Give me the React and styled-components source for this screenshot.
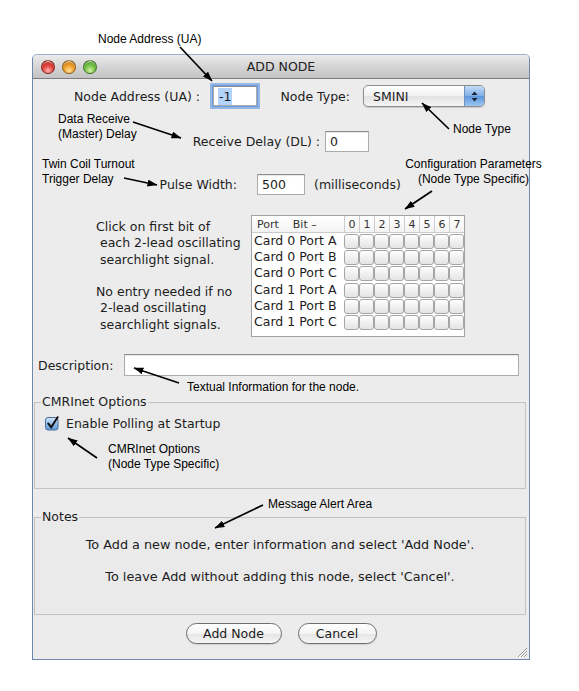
import React from 'react';
import styled, { createGlobalStyle } from 'styled-components';

const GlobalStyle = createGlobalStyle`
  html, body {
    margin: 0;
    padding: 0;
    background: #fff;
  }
  body {
    font-family: "DejaVu Sans", "Liberation Sans", sans-serif;
  }
`;

const Stage = styled.div`
  position: relative;
  width: 579px;
  height: 691px;
  box-sizing: border-box;
  padding: 54px 0 0 32px;
  background: #fff;
`;

const Window = styled.div`
  position: relative;
  width: 498px;
  height: 606px;
  box-sizing: border-box;
  border: 1px solid #6f89ad;
  border-top-color: #9db2cc;
  border-radius: 5px 5px 0 0;
  background: #ececec;
  display: flex;
  flex-direction: column;
  font-size: 12.5px;
  color: #1c1c1c;
`;

const TitleBar = styled.div`
  height: 23px;
  flex: none;
  border-bottom: 1px solid #7d7d7d;
  border-radius: 4px 4px 0 0;
  background: linear-gradient(#ebebeb, #d3d3d3 55%, #c3c3c3);
  display: grid;
  grid-template-columns: 1fr auto 1fr;
  align-items: center;
`;

const Lights = styled.div`
  display: flex;
  gap: 7px;
  padding-left: 8px;
`;

const lightColors = {
  red: ['#ffb3ad', '#e2453e', '#a8201a'],
  amber: ['#ffe19c', '#f2a12c', '#b86a10'],
  green: ['#d2f3a6', '#79c44a', '#3f8a1f'],
};

const Light = styled.span`
  width: 14px;
  height: 14px;
  border-radius: 50%;
  box-sizing: border-box;
  border: 1px solid rgba(0, 0, 0, 0.35);
  background: ${(p) => {
    const [hi, mid, lo] = lightColors[p.$color];
    return `radial-gradient(circle at 50% 80%, ${hi} 0%, ${mid} 45%, ${lo} 100%)`;
  }};
  box-shadow: inset 0 2px 1px -1px rgba(255, 255, 255, 0.7);
`;

const Title = styled.div`
  font-size: 12.5px;
  color: #222;
`;

const Body = styled.div`
  flex: 1;
  display: flex;
  flex-direction: column;
`;

const Row = styled.div`
  display: flex;
  align-items: center;
  height: ${(p) => p.$h}px;
  margin-top: ${(p) => p.$mt}px;
  flex: none;
`;

const Label = styled.div`
  width: ${(p) => (p.$w ? `${p.$w}px` : 'auto')};
  margin-left: ${(p) => p.$ml || 0}px;
  text-align: ${(p) => (p.$right ? 'right' : 'left')};
  white-space: nowrap;
  flex: none;
`;

const Field = styled.div`
  width: ${(p) => p.$w}px;
  height: ${(p) => p.$h || 21}px;
  margin-left: ${(p) => p.$ml || 0}px;
  box-sizing: border-box;
  flex: none;
  background: #fff;
  border: 1px solid #acacac;
  border-top-color: #8c8c8c;
  box-shadow: ${(p) =>
    p.$focus
      ? '0 0 0 1px #6a9be0, 0 0 0 3px rgba(120, 166, 226, 0.75)'
      : 'inset 0 1px 1px rgba(0, 0, 0, 0.1)'};
  padding-left: 4px;
  display: flex;
  align-items: center;
`;

const Selected = styled.span`
  background: #b3d3fb;
  padding: 1px 1px;
`;

const Select = styled.div`
  width: 122px;
  height: 22px;
  margin-left: 13px;
  box-sizing: border-box;
  border: 1px solid #8d8d8d;
  border-radius: 5px;
  overflow: hidden;
  display: flex;
  align-items: stretch;
  background: linear-gradient(#ffffff, #f1f1f1 50%, #e3e3e3 52%, #f4f4f4);
  box-shadow: 0 1px 1px rgba(0, 0, 0, 0.15);
`;

const SelectValue = styled.span`
  flex: 1;
  padding-left: 9px;
  display: flex;
  align-items: center;
`;

const SelectButton = styled.span`
  width: 19px;
  border-left: 1px solid #6f8fbd;
  background: linear-gradient(#c5dcf6, #80b0e8 48%, #5e97df 52%, #9cc6f0);
  display: flex;
  align-items: center;
  justify-content: center;
`;

const HelpText = styled.div`
  width: 155px;
  margin-left: 63px;
  align-self: flex-start;
  padding-top: 4px;
  white-space: pre;
  line-height: 16.3px;
  flex: none;
`;

const BitTable = styled.div`
  width: 214px;
  height: 122px;
  box-sizing: border-box;
  border: 1px solid #a3a3a3;
  background: #fff;
  display: flex;
  flex-direction: column;
  flex: none;
`;

const HeadRow = styled.div`
  display: grid;
  grid-template-columns: 92px repeat(8, 15px);
  height: 16px;
  border-bottom: 1px solid #cbcbcb;
  background: linear-gradient(#ffffff, #f3f3f3);
  font-size: 11px;
  color: #333;
`;

const HeadCell = styled.div`
  display: flex;
  align-items: center;
  justify-content: ${(p) => (p.$first ? 'flex-start' : 'center')};
  border-left: ${(p) => (p.$first ? 'none' : '1px solid #cdcdcd')};
  padding-left: ${(p) => (p.$first ? '5px' : '0')};
  white-space: pre;
`;

const DataRow = styled.div`
  display: grid;
  grid-template-columns: 92px repeat(8, 15px);
  height: 16.2px;
`;

const RowLabel = styled.div`
  padding-left: 2px;
  line-height: 16px;
  white-space: nowrap;
`;

const Bit = styled.div`
  margin-top: 1px;
  height: 15px;
  box-sizing: border-box;
  border: 1px solid #a5a5a5;
  border-radius: 3px;
  background: linear-gradient(#ffffff, #f0f0f0 50%, #e4e4e4);
`;

const Fieldset = styled.fieldset`
  margin: ${(p) => p.$mt}px 0 0 1px;
  width: 492px;
  height: ${(p) => p.$h}px;
  box-sizing: border-box;
  padding: ${(p) => p.$pt}px 10px 0 10px;
  border: 1px solid #c2c2c2;
  border-radius: 0;
  background: #eaeaea;
  flex: none;
`;

const Legend = styled.legend`
  margin-left: -4px;
  padding: 0 1px;
  line-height: 16px;
  font-size: 12.5px;
  color: #1c1c1c;
`;

const CheckRow = styled.label`
  display: flex;
  align-items: center;
  gap: 6px;
  height: 16px;
`;

const Note = styled.p`
  margin: ${(p) => p.$mt}px 0 0;
  text-align: center;
  font-size: 12.8px;
  line-height: 16px;
`;

const ButtonBar = styled.div`
  display: flex;
  justify-content: center;
  gap: 16px;
  margin-top: 8px;
  flex: none;
`;

const Button = styled.button`
  width: ${(p) => p.$w}px;
  height: 21px;
  box-sizing: border-box;
  border: 1px solid #6e6e6e;
  border-radius: 11px;
  padding: 0;
  font-family: inherit;
  font-size: 12.5px;
  color: #1c1c1c;
  background: linear-gradient(#ffffff, #f4f4f4 50%, #e5e5e5 54%, #f6f6f6);
  box-shadow: 0 1px 1px rgba(0, 0, 0, 0.12);
`;

const Grip = styled.svg`
  position: absolute;
  right: 1px;
  bottom: 1px;
`;

const Overlay = styled.svg`
  position: absolute;
  left: 0;
  top: 0;
  pointer-events: none;
`;

const Callout = styled.div`
  position: absolute;
  left: ${(p) => p.$x}px;
  top: ${(p) => p.$y}px;
  width: ${(p) => (p.$w ? `${p.$w}px` : 'auto')};
  text-align: ${(p) => (p.$center ? 'center' : 'left')};
  font-family: "Liberation Sans", Arial, sans-serif;
  font-size: 12px;
  line-height: 15px;
  color: #000;
  white-space: pre;
`;

const callouts = [
  { x: 98, y: 32, text: 'Node Address (UA)' },
  { x: 58, y: 112, text: 'Data Receive\n(Master) Delay' },
  { x: 453, y: 122, text: 'Node Type' },
  { x: 42, y: 157, text: 'Twin Coil Turnout\nTrigger Delay' },
  { x: 398, y: 157, w: 151, center: true, text: 'Configuration Parameters\n(Node Type Specific)' },
  { x: 187, y: 380, text: 'Textual Information for the node.' },
  { x: 108, y: 442, text: 'CMRInet Options\n(Node Type Specific)' },
  { x: 268, y: 497, text: 'Message Alert Area' },
];

const arrows = [
  [180, 47, 212, 81],
  [133, 122, 181, 138],
  [449, 129, 422, 103],
  [124, 178, 157, 185],
  [432, 191, 405, 209],
  [179, 383, 134, 368],
  [97, 458, 68, 438],
  [263, 505, 215, 528],
];

const ports = ['Card 0 Port A', 'Card 0 Port B', 'Card 0 Port C', 'Card 1 Port A', 'Card 1 Port B', 'Card 1 Port C'];
const bits = [0, 1, 2, 3, 4, 5, 6, 7];

const help = 'Click on first bit of\n each 2-lead oscillating\n searchlight signal.\n\nNo entry needed if no\n 2-lead oscillating\n searchlight signals.';

function CheckIcon() {
  return (
    <svg width="15" height="15" viewBox="0 0 15 15">
      <defs>
        <linearGradient id="cbFill" x1="0" y1="0" x2="0" y2="1">
          <stop offset="0" stopColor="#d6e7fa" />
          <stop offset="0.5" stopColor="#93bdec" />
          <stop offset="1" stopColor="#5c96dc" />
        </linearGradient>
      </defs>
      <rect x="0.5" y="1.5" width="12.5" height="12.5" rx="2.5" fill="url(#cbFill)" stroke="#4d6e98" />
      <path d="M3.3 7.6 L6.2 11.2 L12.6 1.2" fill="none" stroke="#111" strokeWidth="2" strokeLinecap="round" />
    </svg>
  );
}

export default function App() {
  return (
    <Stage>
      <GlobalStyle />
      <Window>
        <TitleBar>
          <Lights>
            <Light $color="red" />
            <Light $color="amber" />
            <Light $color="green" />
          </Lights>
          <Title>ADD NODE</Title>
          <span />
        </TitleBar>
        <Body>
          <Row $h={24} $mt={5}>
            <Label $w={167} $right>Node Address (UA) :</Label>
            <Field $w={44} $h={20} $ml={13} $focus>
              <Selected>-1</Selected>
            </Field>
            <Label $w={93} $right>Node Type:</Label>
            <Select>
              <SelectValue>SMINI</SelectValue>
              <SelectButton>
                <svg width="7" height="11" viewBox="0 0 7 11">
                  <path d="M3.5 0.5 L6.5 4 H0.5 Z M0.5 7 H6.5 L3.5 10.5 Z" fill="#1b2633" />
                </svg>
              </SelectButton>
            </Select>
          </Row>

          <Row $h={22} $mt={22}>
            <Label $w={287} $right>Receive Delay (DL) :</Label>
            <Field $w={44} $ml={5}>0</Field>
          </Row>

          <Row $h={22} $mt={21}>
            <Label $w={204} $right>Pulse Width:</Label>
            <Field $w={48} $ml={20}>500</Field>
            <Label $ml={9}>(milliseconds)</Label>
          </Row>

          <Row $h={122} $mt={20}>
            <HelpText>{help}</HelpText>
            <BitTable>
              <HeadRow>
                <HeadCell $first>{'Port    Bit –'}</HeadCell>
                {bits.map((b) => (
                  <HeadCell key={b}>{b}</HeadCell>
                ))}
              </HeadRow>
              {ports.map((p) => (
                <DataRow key={p}>
                  <RowLabel>{p}</RowLabel>
                  {bits.map((b) => (
                    <Bit key={b} />
                  ))}
                </DataRow>
              ))}
            </BitTable>
          </Row>

          <Row $h={22} $mt={17}>
            <Label $w={86} $ml={5}>Description:</Label>
            <Field $w={395} $h={22} />
          </Row>

          <Fieldset $mt={18} $h={95} $pt={5}>
            <Legend>CMRInet Options</Legend>
            <CheckRow>
              <CheckIcon />
              Enable Polling at Startup
            </CheckRow>
          </Fieldset>

          <Fieldset $mt={20} $h={106} $pt={12}>
            <Legend>Notes</Legend>
            <Note $mt={0}>To Add a new node, enter information and select 'Add Node'.</Note>
            <Note $mt={16}>To leave Add without adding this node, select 'Cancel'.</Note>
          </Fieldset>

          <ButtonBar>
            <Button $w={96}>Add Node</Button>
            <Button $w={79}>Cancel</Button>
          </ButtonBar>
        </Body>
        <Grip width="13" height="13" viewBox="0 0 13 13">
          <path d="M12 3 L3 12 M12 6 L6 12 M12 9 L9 12" stroke="#9a9a9a" strokeWidth="1" />
          <path d="M12 4 L4 12 M12 7 L7 12 M12 10 L10 12" stroke="#fff" strokeWidth="1" />
        </Grip>
      </Window>

      {callouts.map((c) => (
        <Callout key={c.text} $x={c.x} $y={c.y} $w={c.w} $center={c.center}>
          {c.text}
        </Callout>
      ))}
      <Overlay width="579" height="691" viewBox="0 0 579 691">
        <defs>
          <marker id="head" markerWidth="10" markerHeight="7" refX="9.5" refY="3.5" orient="auto" markerUnits="userSpaceOnUse">
            <path d="M0 0 L10 3.5 L0 7 Z" fill="#000" />
          </marker>
        </defs>
        {arrows.map(([x1, y1, x2, y2]) => (
          <line key={`${x1}-${y1}`} x1={x1} y1={y1} x2={x2} y2={y2} stroke="#000" strokeWidth="1.7" markerEnd="url(#head)" />
        ))}
      </Overlay>
    </Stage>
  );
}
